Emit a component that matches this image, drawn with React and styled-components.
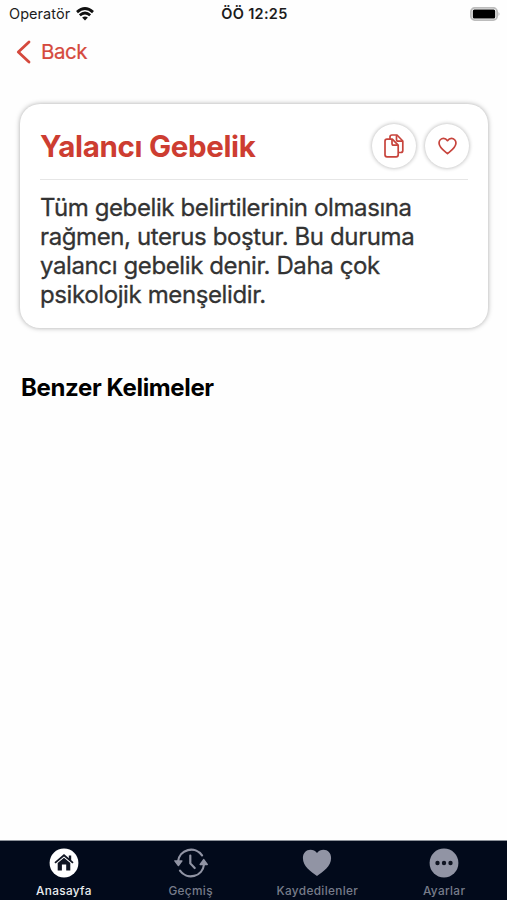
import React from "react";
import styled, { createGlobalStyle } from "styled-components";

const GlobalStyle = createGlobalStyle`
  * { box-sizing: border-box; }
  body { margin: 0; background: #fff; }
  svg { display: block; flex: none; }
`;

const Screen = styled.div`
  height: 900px;
  display: flex;
  flex-direction: column;
  overflow: hidden;
  background: #fefefe;
  font-family: Inter, "Liberation Sans", sans-serif;
  color: #000;
`;

const StatusBar = styled.header`
  height: 27px;
  padding: 0 7px 0 9px;
  display: grid;
  grid-template-columns: 1fr auto 1fr;
  align-items: center;
  font-size: 14.5px;
  line-height: 27px;
  color: #1c1c1c;
`;

const Carrier = styled.div`
  display: flex;
  align-items: center;
  gap: 6px;
  letter-spacing: 0.05px;
`;

const Clock = styled.time`
  font-weight: 600;
  letter-spacing: 0.3px;
`;

const Battery = styled.div`
  display: flex;
  justify-content: flex-end;
`;

const BackButton = styled.button`
  height: 50px;
  padding: 0 16px;
  border: 0;
  background: none;
  display: flex;
  align-items: center;
  align-self: flex-start;
  gap: 10px;
  font: 400 20.5px/50px Inter, sans-serif;
  letter-spacing: -0.45px;
  color: #d5493d;
`;

const BackLabel = styled.span`
  -webkit-text-stroke: 0.2px currentColor;
`;

const Card = styled.article`
  margin: 27px 19px 0 20px;
  height: 224px;
  padding: 20px 20px 0;
  border-radius: 20px;
  background: #fff;
  box-shadow: 0 0 5px rgba(0, 0, 0, 0.34);
`;

const CardHeader = styled.div`
  height: 56px;
  display: flex;
  align-items: flex-start;
  justify-content: space-between;
  border-bottom: 1px solid #e6e6e6;
`;

const Title = styled.h1`
  margin: 0;
  font-size: 29.5px;
  font-weight: 700;
  line-height: 44px;
  letter-spacing: -0.33px;
  color: #cd3d31;
`;

const Actions = styled.div`
  margin-right: -1px;
  display: flex;
  gap: 9px;
`;

const RoundButton = styled.button`
  width: 44px;
  height: 44px;
  padding: 0;
  border: 0;
  border-radius: 50%;
  display: grid;
  place-items: center;
  background: #fff;
  color: #c7443c;
  box-shadow: 0 0 4px rgba(0, 0, 0, 0.32);
`;

const Definition = styled.p`
  margin: 12.5px 0 0;
  font-size: 24px;
  font-weight: 400;
  line-height: 29.1px;
  letter-spacing: -0.39px;
  color: #333;
  white-space: nowrap;
  -webkit-text-stroke: 0.3px currentColor;
`;

const SectionTitle = styled.h2`
  margin: 45px 21px 0;
  font-size: 24px;
  font-weight: 700;
  line-height: 30px;
  letter-spacing: -0.36px;
`;

const TabBar = styled.nav`
  height: 60px;
  margin-top: auto;
  border-top: 1px solid #8d929a;
  background: #020a1b;
  display: grid;
  grid-template-columns: repeat(4, 1fr);
`;

const Tab = styled.a`
  padding: 7px 0 0 1px;
  display: flex;
  flex-direction: column;
  align-items: center;
  gap: 5px;
  color: ${(p) => (p.$active ? "#fff" : "#9194a4")};
`;

const TabLabel = styled.span`
  font-size: 11.8px;
  font-weight: 500;
  line-height: 16px;
  letter-spacing: 0.35px;
  color: ${(p) => (p.$active ? "#e9ebef" : "#777c8a")};
`;

const WifiIcon = () => (
  <svg width="18" height="14" viewBox="0 0 18 14" fill="none" stroke="#111" strokeWidth="2.8">
    <path d="M1 5.1 Q9-2 17 5.1" />
    <path d="M3.8 8.3 Q9 3.7 14.2 8.3" />
    <path d="M9 13.5 L6.1 10.6 Q9 8.2 11.9 10.6Z" fill="#111" stroke="none" />
  </svg>
);

const BatteryIcon = () => (
  <svg width="30" height="14" viewBox="0 0 30 14">
    <rect x="0.9" y="0.9" width="26.2" height="12.2" rx="3.8" fill="#fff" stroke="#bcbcbc" strokeWidth="1.8" />
    <rect x="2.8" y="2.6" width="22.4" height="8.8" rx="1.5" fill="#000" />
    <path d="M28.5 5 Q30.5 7 28.5 9Z" fill="#b5b5b5" />
  </svg>
);

const ChevronIcon = () => (
  <svg width="15" height="24" viewBox="0 0 15 24" fill="none" stroke="#d5493d" strokeWidth="2.8" strokeLinecap="round" strokeLinejoin="round">
    <path d="M13 2 L2.3 12 L13 22" />
  </svg>
);

const CopyIcon = () => (
  <svg width="20" height="24" viewBox="0 0 20 24" fill="none" stroke="currentColor" strokeWidth="1.7" strokeLinejoin="round">
    <path d="M6 5 V3 Q6 1 8 1 H13 L18.8 7 V16.5 Q18.8 18.5 16.8 18.5 H14.3" />
    <path d="M12.5 1.2 V5.5 Q12.5 7.2 14.2 7.2 H18.5" />
    <path d="M3 5.2 H8.3 L14.2 11.2 V20.8 Q14.2 22.8 12.2 22.8 H3 Q1 22.8 1 20.8 V7.2 Q1 5.2 3 5.2Z" />
    <path d="M8 5.4 V9.5 Q8 11.2 9.7 11.2 H14" />
  </svg>
);

const HeartOutlineIcon = () => (
  <svg width="19" height="18" viewBox="0 0 20 18" fill="none" stroke="currentColor" strokeWidth="1.8" strokeLinejoin="round">
    <path d="M10 3.4 C8.8 1.7 7.4 1 5.8 1 C3.2 1 1.1 3.2 1.1 5.9 C1.1 10.8 6 13.8 10 17 C14 13.8 18.9 10.8 18.9 5.9 C18.9 3.2 16.8 1 14.2 1 C12.6 1 11.2 1.7 10 3.4Z" />
  </svg>
);

const HomeIcon = () => (
  <svg width="30" height="30" viewBox="0 0 30 30">
    <circle cx="15" cy="15" r="14.4" fill="#fff" />
    <path d="M6 14.9 L15 7.2 L24 14.9" fill="none" stroke="#101522" strokeWidth="1.8" />
    <path d="M19.8 7.5 H22.2 V13 L19.8 10.8Z" fill="#101522" />
    <path d="M8.7 15 L15 9.8 L21.3 15 V22.5 H17.2 V16.5 H12.9 V22.5 H8.7Z" fill="#101522" />
  </svg>
);

const HistoryIcon = () => (
  <svg width="34" height="30" viewBox="0 0 34 30" fill="none" stroke="currentColor" strokeWidth="2.2" strokeLinecap="round">
    <path d="M4 13.5 A13.2 13.2 0 0 1 28 7.4" />
    <path d="M30 16.5 A13.2 13.2 0 0 1 6 22.6" />
    <path d="M0.9 12.9 H7.9 L4.4 17.5Z M26.2 16.4 L29.7 11.6 L33.2 16.4Z" fill="currentColor" strokeWidth="1.5" strokeLinejoin="round" />
    <path d="M16.3 7.5 V15.4 L20.7 20" />
  </svg>
);

const HeartIcon = () => (
  <svg width="30" height="30" viewBox="0 0 30 30" fill="currentColor">
    <path d="M15 5.1 C13.3 2.8 11.1 1.8 8.5 1.8 C4.2 1.8 .9 5.2 .9 9.9 C.9 18.2 8.8 23.3 15 28 C21.2 23.3 29.1 18.2 29.1 9.9 C29.1 5.2 25.8 1.8 21.5 1.8 C18.9 1.8 16.7 2.8 15 5.1Z" />
  </svg>
);

const MoreIcon = () => (
  <svg width="30" height="30" viewBox="0 0 30 30">
    <circle cx="15" cy="15" r="14.4" fill="currentColor" />
    <g fill="#101522">
      <circle cx="8.5" cy="15" r="2.2" />
      <circle cx="15" cy="15" r="2.2" />
      <circle cx="21.5" cy="15" r="2.2" />
    </g>
  </svg>
);

const tabs = [
  { label: "Anasayfa", Icon: HomeIcon, active: true },
  { label: "Geçmiş", Icon: HistoryIcon },
  { label: "Kaydedilenler", Icon: HeartIcon },
  { label: "Ayarlar", Icon: MoreIcon },
];

export default function App() {
  return (
    <Screen lang="tr">
      <GlobalStyle />
      <StatusBar>
        <Carrier>Operatör <WifiIcon /></Carrier>
        <Clock>ÖÖ 12:25</Clock>
        <Battery><BatteryIcon /></Battery>
      </StatusBar>
      <BackButton><ChevronIcon /><BackLabel>Back</BackLabel></BackButton>
      <Card>
        <CardHeader>
          <Title>Yalancı Gebelik</Title>
          <Actions>
            <RoundButton aria-label="Kopyala"><CopyIcon /></RoundButton>
            <RoundButton aria-label="Kaydet"><HeartOutlineIcon /></RoundButton>
          </Actions>
        </CardHeader>
        <Definition>
          Tüm gebelik belirtilerinin olmasına<br />
          rağmen, uterus boştur. Bu duruma<br />
          yalancı gebelik denir. Daha çok<br />
          psikolojik menşelidir.
        </Definition>
      </Card>
      <SectionTitle>Benzer Kelimeler</SectionTitle>
      <TabBar>
        {tabs.map(({ label, Icon, active }) => (
          <Tab key={label} $active={active}>
            <Icon />
            <TabLabel $active={active}>{label}</TabLabel>
          </Tab>
        ))}
      </TabBar>
    </Screen>
  );
}
